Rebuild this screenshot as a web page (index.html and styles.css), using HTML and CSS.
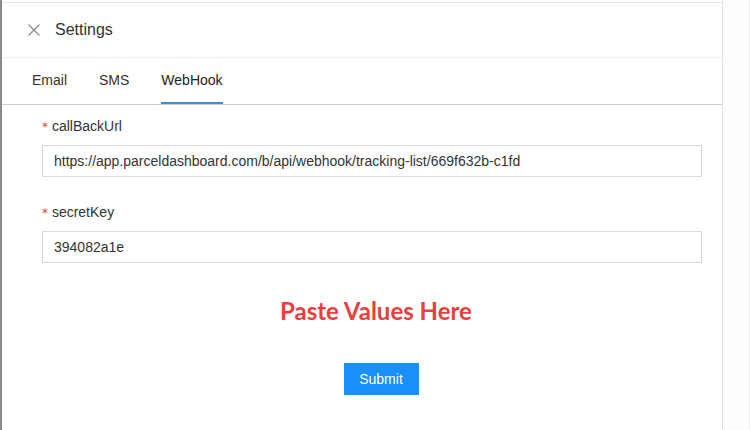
FILE: index.html
```html
<!DOCTYPE html>
<html lang="en">

<head>
    <meta charset="UTF-8">
    <meta name="viewport" content="width=device-width, initial-scale=1.0">
    <title>Settings</title>
    <link rel="stylesheet" href="styles.css">
</head>

<body>
    <div class="page">
        <div class="panel">
            <!-- Header -->
            <div class="panel-header">
                <svg class="close-icon" width="12" height="12" viewBox="0 0 12 12">
                    <path d="M0.5 0.5 L11.5 11.5 M11.5 0.5 L0.5 11.5" stroke="#8c8c8c" stroke-width="1.3" fill="none"/>
                </svg>
                <span class="panel-title">Settings</span>
            </div>

            <!-- Tabs -->
            <div class="tabs">
                <div class="tab">Email</div>
                <div class="tab">SMS</div>
                <div class="tab active">WebHook</div>
            </div>

            <form class="webhook-form">
                <div class="form-item">
                    <label><span class="required">*</span> callBackUrl</label>
                    <input type="text" value="https://app.parceldashboard.com/b/api/webhook/tracking-list/669f632b-c1fd">
                </div>
                <div class="form-item">
                    <label><span class="required">*</span> secretKey</label>
                    <input type="text" value="394082a1e">
                </div>

                <p class="note">Paste Values Here</p>

                <div class="actions">
                    <button type="button" class="submit-button">Submit</button>
                </div>
            </form>
        </div>
        <div class="side"></div>
    </div>
</body>

</html>
```

FILE: styles.css
```css
body, p {
    margin: 0;
    padding: 0;
}

body {
    font-family: 'Liberation Sans', Arial, sans-serif;
    background-color: #fff;
    color: #333;
    width: 750px;
    height: 430px;
    overflow: hidden;
}

.page {
    display: flex;
    height: 430px;
    border-left: 2px solid #8a8a8a;
}

.panel {
    width: 720px;
    padding-top: 2px;
    border-right: 1px solid #e3e3e3;
    background-color: #fff;
}

.side {
    flex: 1;
    border-right: 1px solid #eceff2;
    background-color: #fdfdfd;
}

/* Header */
.panel-header {
    display: flex;
    align-items: center;
    height: 54px;
    padding-left: 26px;
    border-top: 1px solid #e6e6e6;
    border-bottom: 1px solid #ececec;
}

.close-icon {
    margin-right: 15px;
}

.panel-title {
    font-size: 16px;
    color: #333;
}

/* Tabs */
.tabs {
    display: flex;
    height: 46px;
    padding-left: 30px;
    border-bottom: 1px solid #cfcfcf;
}

.tab {
    display: flex;
    align-items: center;
    font-size: 14px;
    color: #333;
    margin-right: 32px;
    border-bottom: 2px solid transparent;
}

.tab.active {
    color: #222;
    border-bottom-color: #3d8fda;
}

/* Form */
.webhook-form {
    padding: 12px 18px 0 40px;
}

.form-item {
    margin-bottom: 26px;
}

label {
    display: block;
    font-size: 14px;
    color: #333;
    margin-bottom: 9px;
    line-height: 18px;
}

.required {
    color: #e0453a;
    font-family: 'DejaVu Sans', sans-serif;
    font-size: 12px;
}

input {
    display: block;
    width: 660px;
    height: 32px;
    box-sizing: border-box;
    padding: 0 11px;
    font-family: 'Liberation Sans', Arial, sans-serif;
    font-size: 14px;
    color: #333;
    border: 1px solid #d9d9d9;
    border-radius: 0;
    outline: none;
}

.note {
    text-align: center;
    width: 660px;
    margin-left: 4px;
    color: #e8403f;
    font-family: Lato, sans-serif;
    font-weight: bold;
    font-size: 24px;
    margin-top: 33px;
}

.actions {
    width: 660px;
    margin-left: 9px;
    display: flex;
    justify-content: center;
    margin-top: 38px;
}

.submit-button {
    background-color: #1890ff;
    color: #fff;
    font-family: 'Liberation Sans', Arial, sans-serif;
    font-size: 14px;
    width: 75px;
    height: 32px;
    border: none;
    border-radius: 0;
    cursor: pointer;
}
```
